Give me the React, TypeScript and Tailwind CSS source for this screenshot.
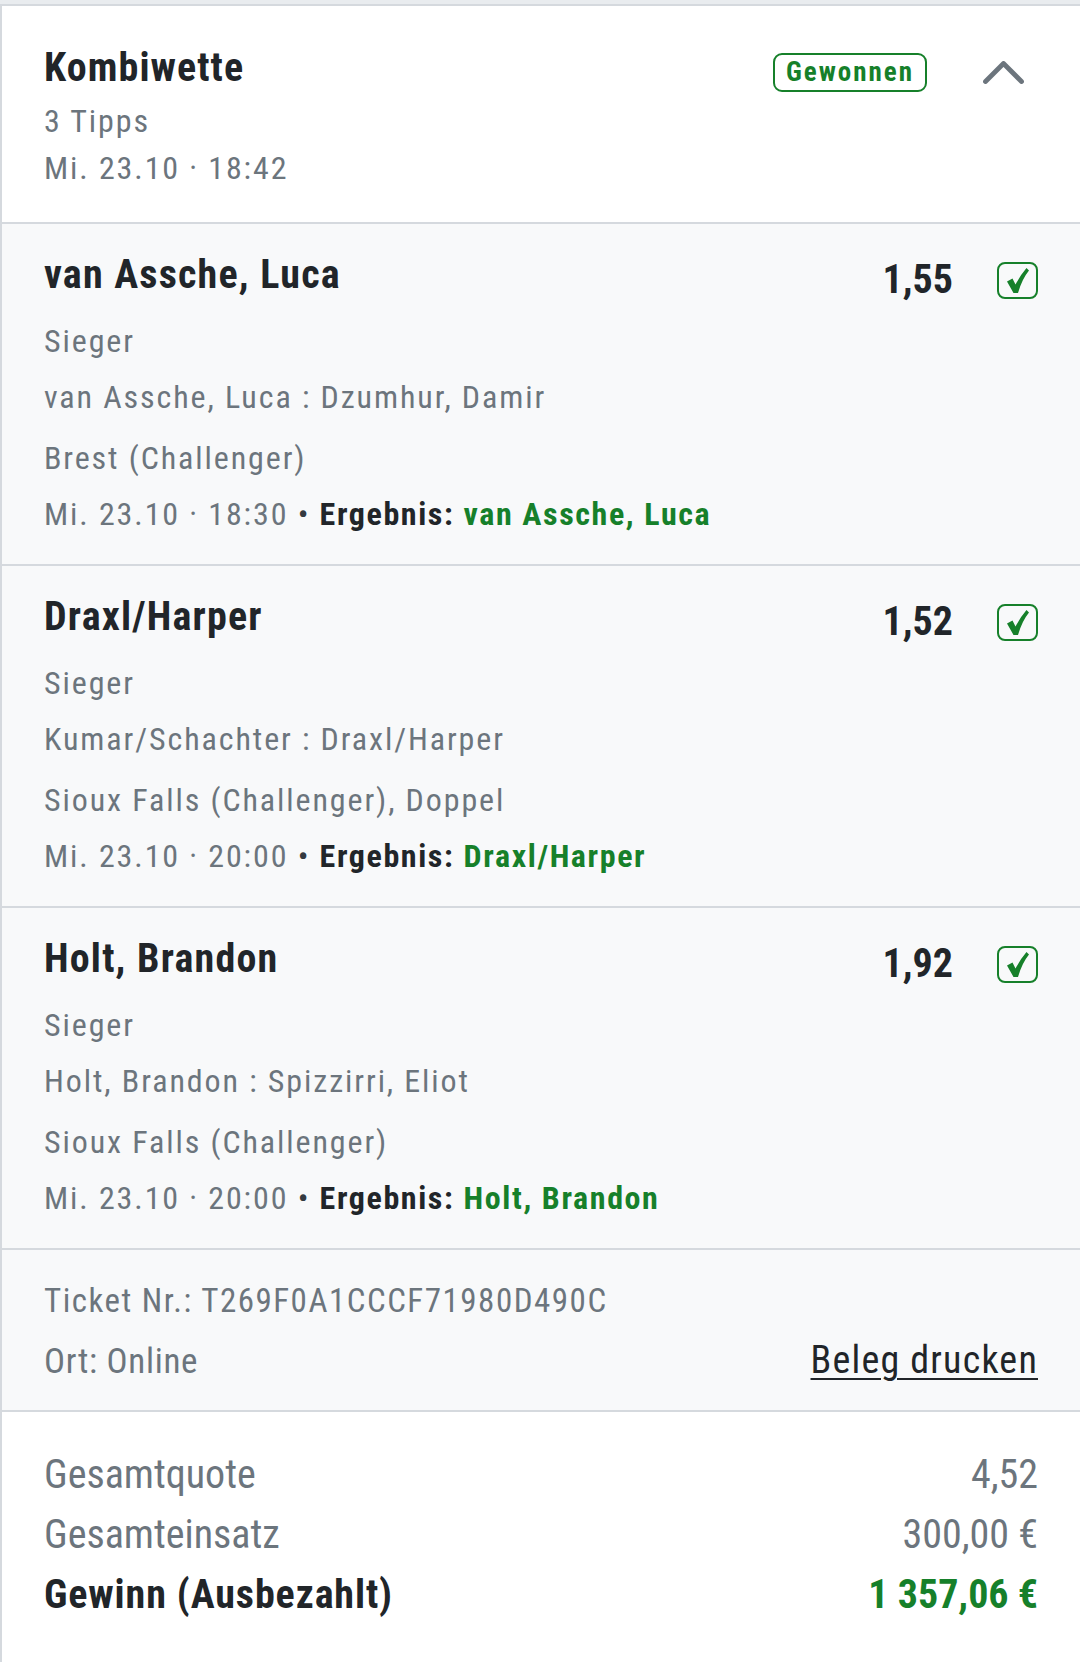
import React from "react";

type Tip = {
  name: string;
  odds: string;
  market: string;
  match: string;
  event: string;
  date: string;
  result: string;
};

const tips: Tip[] = [
  {
    name: "van Assche, Luca",
    odds: "1,55",
    market: "Sieger",
    match: "van Assche, Luca : Dzumhur, Damir",
    event: "Brest (Challenger)",
    date: "Mi. 23.10 · 18:30",
    result: "van Assche, Luca",
  },
  {
    name: "Draxl/Harper",
    odds: "1,52",
    market: "Sieger",
    match: "Kumar/Schachter : Draxl/Harper",
    event: "Sioux Falls (Challenger), Doppel",
    date: "Mi. 23.10 · 20:00",
    result: "Draxl/Harper",
  },
  {
    name: "Holt, Brandon",
    odds: "1,92",
    market: "Sieger",
    match: "Holt, Brandon : Spizzirri, Eliot",
    event: "Sioux Falls (Challenger)",
    date: "Mi. 23.10 · 20:00",
    result: "Holt, Brandon",
  },
];

function CheckBox() {
  return (
    <span className="flex h-[37px] w-[41px] items-center justify-center rounded-[8px] border-2 border-[#16802a]">
      <svg width="22" height="25" viewBox="0 0 22 25" className="ml-[1px]">
        <path
          d="M0 13.5 L5.5 10.5 L8.5 16.5 Q13 7.5 19.5 0 L22 2.5 Q15 11 11 25 L6.5 25 Z"
          fill="#16802a"
        />
      </svg>
    </span>
  );
}

function TipRow({ tip }: { tip: Tip }) {
  return (
    <div className="border-b-2 border-[#d5d9de] bg-[#f8f9fa] px-[42px] pb-[30px] pt-[27px]">
      <div className="flex items-start justify-between">
        <p className="text-[40px] font-bold leading-[48px] tracking-[1.2px] text-[#212529]">{tip.name}</p>
        <div className="flex items-center gap-[44px] pt-[9px]">
          <span className="text-[40px] font-bold leading-[40px] text-[#212529]">{tip.odds}</span>
          <CheckBox />
        </div>
      </div>
      <div className="text-[32px] leading-[40px] tracking-[1.9px] text-[#6c757d]">
        <p className="mt-[21px]">{tip.market}</p>
        <p className="mt-[16px]">{tip.match}</p>
        <p className="mt-[21px]">{tip.event}</p>
        <p className="mt-[16px]">
          {tip.date} <span className="text-[#343a40]">•</span>{" "}
          <span className="font-bold tracking-[1.6px] text-[#212529]">Ergebnis:</span>{" "}
          <span className="font-bold tracking-[1.6px] text-[#16802a]">{tip.result}</span>
        </p>
      </div>
    </div>
  );
}

export default function App() {
  return (
    <div className="min-h-screen bg-[#e9ecef] pt-[4px] font-['Roboto_Condensed','Liberation_Sans_Narrow','DejaVu_Sans_Condensed',Roboto,sans-serif] font-stretch-condensed">
      <div className="border-y-2 border-l-2 border-[#d5d9de] bg-white">
        {/* header */}
        <div className="flex items-start justify-between border-b-2 border-[#d5d9de] bg-white pb-[30px] pl-[42px] pr-[56px] pt-[38px]">
          <div>
            <p className="text-[40px] font-bold leading-[48px] tracking-[1.1px] text-[#212529]">Kombiwette</p>
            <p className="mt-[6px] text-[32px] leading-[47px] tracking-[1.9px] text-[#6c757d]">3 Tipps</p>
            <p className="text-[32px] leading-[47px] tracking-[1.9px] text-[#6c757d]">Mi. 23.10 · 18:42</p>
          </div>
          <div className="flex items-center gap-[56px] pt-[9px]">
            <span className="rounded-[9px] border-2 border-[#16802a] px-[11px] text-[27px] font-bold leading-[35px] tracking-[2px] text-[#16802a]">
              Gewonnen
            </span>
            <svg width="41" height="23" viewBox="0 0 41 23">
              <polyline
                points="2.5,20.5 20.5,2.5 38.5,20.5"
                fill="none"
                stroke="#6c757d"
                strokeWidth="4.8"
                strokeLinecap="round"
                strokeLinejoin="round"
              />
            </svg>
          </div>
        </div>

        {tips.map((t) => (
          <TipRow key={t.name} tip={t} />
        ))}

        {/* ticket info */}
        <div className="border-b-2 border-[#d5d9de] bg-[#f8f9fa] px-[42px] pb-[28px] pt-[31px]">
          <p className="text-[33px] leading-[40px] tracking-[1.5px] text-[#6c757d]">Ticket Nr.: T269F0A1CCCF71980D490C</p>
          <div className="mt-[21px] flex items-end justify-between">
            <p className="text-[35px] leading-[40px] tracking-[0.7px] text-[#6c757d]">Ort: Online</p>
            <a href="#" className="-translate-y-[2px] text-[38px] leading-[40px] tracking-[1.2px] text-[#212529] underline decoration-2 underline-offset-[5px]">
              Beleg drucken
            </a>
          </div>
        </div>

        {/* summary */}
        <div className="bg-white px-[42px] pb-[42px] pt-[33px]">
          <div className="flex justify-between text-[40px] leading-[60px] text-[#6c757d]">
            <span>Gesamtquote</span>
            <span>4,52</span>
          </div>
          <div className="flex justify-between text-[40px] leading-[60px] text-[#6c757d]">
            <span>Gesamteinsatz</span>
            <span>300,00 €</span>
          </div>
          <div className="flex justify-between text-[40px] font-bold leading-[60px]">
            <span className="tracking-[0.9px] text-[#212529]">Gewinn (Ausbezahlt)</span>
            <span className="text-[#16802a]">1 357,06 €</span>
          </div>
        </div>
      </div>
    </div>
  );
}
